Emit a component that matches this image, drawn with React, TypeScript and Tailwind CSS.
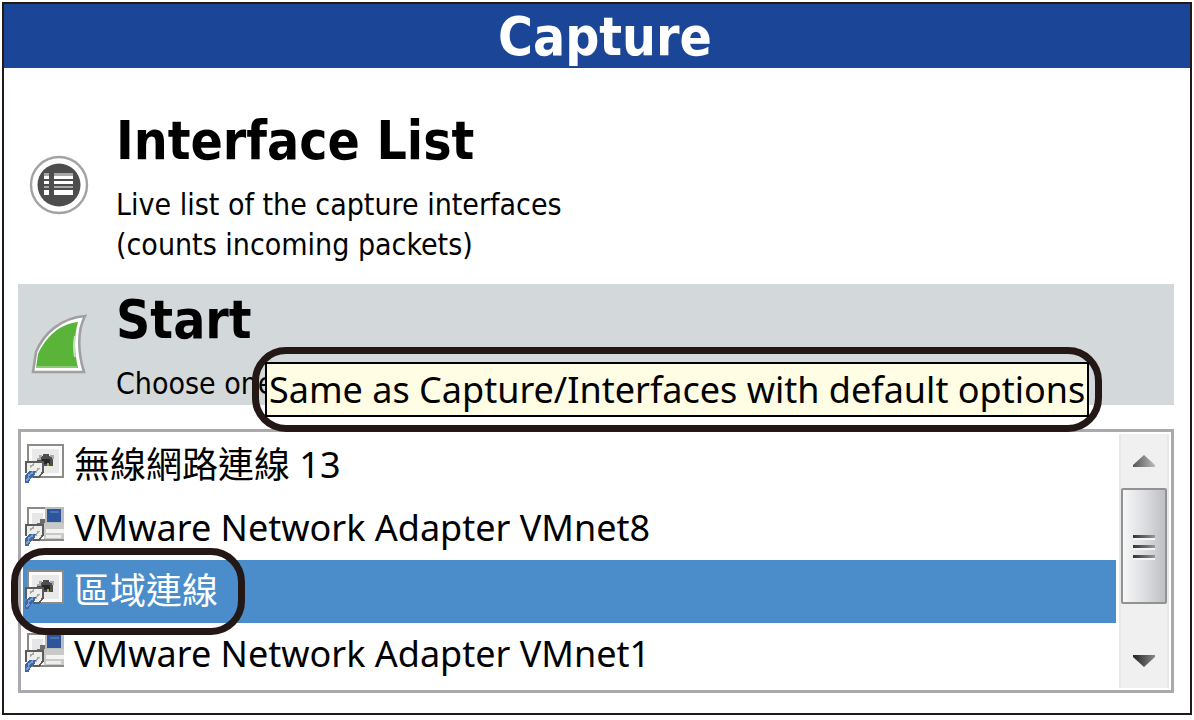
import type { ReactNode } from "react";

function ListIcon() {
  return (
    <svg width="60" height="60" viewBox="0 0 60 60" aria-hidden="true">
      <circle cx="30" cy="30" r="28" fill="#fff" stroke="#a3a3a3" strokeWidth="2.4" />
      <circle cx="30" cy="30" r="21.5" fill="#4d4d4d" />
      <g fill="#fff" shapeRendering="crispEdges">
        <rect x="15" y="18" width="5" height="3" fill="#a8a8a8" />
        <rect x="15" y="21" width="5" height="3" />
        <rect x="15" y="26" width="5" height="3" />
        <rect x="15" y="31" width="5" height="2" fill="#a8a8a8" />
        <rect x="15" y="35" width="5" height="5" />
        <rect x="25" y="18" width="19" height="3" fill="#a8a8a8" />
        <rect x="25" y="21" width="19" height="3" />
        <rect x="25" y="26" width="19" height="3" />
        <rect x="25" y="31" width="19" height="2" fill="#a8a8a8" />
        <rect x="25" y="35" width="19" height="5" />
      </g>
    </svg>
  );
}

function FinIcon() {
  return (
    <svg width="56" height="60" viewBox="0 0 56 60" aria-hidden="true">
      <path
        d="M2 58 L5 38 C13 19 30 4 54 2 C46 17 47 39 53 58 Z"
        fill="#fff"
        stroke="#a0a0a0"
        strokeWidth="2.6"
      />
      <path d="M5 54 L7 40 C15 23 28 10 47 8 C43 22 43 37 47 54 Z" fill="#5bb43a" />
      <path d="M5 53 H46" stroke="#8dca75" strokeWidth="2" />
      <path d="M44 22 Q42 32 44 43" fill="none" stroke="#c5e3ba" strokeWidth="2" />
    </svg>
  );
}

function Plug() {
  return (
    <g>
      <path d="M1 18 H18 V29 L14 33 H6 L1 29 Z" fill="#eeeeec" />
      <path d="M1 29 V18 H18 V28 L14 33 H8" fill="none" stroke="#5c5c5a" strokeWidth="2" />
      <path d="M5 23 L9 20 M10 29 L14 24" stroke="#a8a8a6" strokeWidth="2" />
      <path d="M0 31 L4 27 L11 27 L9 32 L5 35 L4 39 H0 Z" fill="#3c67a8" />
      <path d="M3 32 L8 28 M1 37 L4 34" stroke="#7da0d0" strokeWidth="2" />
    </g>
  );
}

function SocketIcon() {
  return (
    <svg width="39" height="39" viewBox="0 0 39 39" shapeRendering="crispEdges" aria-hidden="true">
      <rect x="3" y="1" width="35" height="32" fill="#fbfbfb" stroke="#8b8c87" strokeWidth="2" />
      <rect x="7" y="5" width="27" height="24" fill="#e9e9e9" />
      <path d="M12 16 H16 V12 H18 V10 H24 V12 H28 V22 H12 Z" fill="#4c4d4c" />
      <path d="M12 15 H15 V12 H17 M25 12 H28 V15" fill="none" stroke="#aaa" strokeWidth="2" />
      <rect x="17" y="15" width="8" height="5" fill="#262826" />
      <rect x="22" y="19" width="2" height="3" fill="#b8a634" />
      <Plug />
    </svg>
  );
}

function VirtualIcon() {
  return (
    <svg width="39" height="39" viewBox="0 0 39 39" shapeRendering="crispEdges" aria-hidden="true">
      <rect x="3" y="1" width="35" height="32" fill="#fbfbfb" stroke="#8b8c87" strokeWidth="2" />
      <rect x="7" y="6" width="11" height="22" fill="#e6e6e6" />
      <path d="M12 16 H15 V12 H20 V19 H12 Z" fill="#6b6b6b" />
      <rect x="20" y="0" width="19" height="18" fill="#b9bcc1" />
      <rect x="22" y="2" width="14" height="13" fill="#2c559b" />
      <path d="M25 4 H34 V6 H25 Z" fill="#4a73b4" />
      <rect x="19" y="16" width="20" height="16" fill="#c9c9c7" />
      <rect x="21" y="22" width="18" height="4" fill="#f4f4f4" />
      <rect x="21" y="28" width="15" height="3" fill="#eeeeec" />
      <path d="M19 33 H39" stroke="#8b8c87" strokeWidth="2" />
      <Plug />
    </svg>
  );
}

function Action({ icon, title, children }: { icon: ReactNode; title: string; children: ReactNode }) {
  return (
    <button type="button" className="flex w-full items-center text-left">
      <span className="flex w-[82px] shrink-0 justify-center pb-2">{icon}</span>
      <span className="block pl-4">
        <span className="block text-[53px] leading-[56px] font-bold">{title}</span>
        <span className="mt-4 block text-[30px] leading-[40px]">{children}</span>
      </span>
    </button>
  );
}

const interfaces = [
  { name: "無線網路連線 13", virtual: false },
  { name: "VMware Network Adapter VMnet8", virtual: true },
  { name: "區域連線", virtual: false, selected: true },
  { name: "VMware Network Adapter VMnet1", virtual: true },
];

const ring = "pointer-events-none absolute border-[7px] border-[#231815]";

export default function App() {
  return (
    <div className="bg-white p-0.5 font-['DejaVu_Sans_Condensed','DejaVu_Sans',sans-serif] text-black">
      <main className="border-2 border-[#231815] pb-5">
        <h1 className="bg-[#1b4697] pt-0.5 pl-4 text-center text-[53px] leading-[62px] font-bold text-white">
          Capture
        </h1>

        <div className="pr-4 pl-3.5">
          <section className="pt-[45px] pb-[19px]">
            <Action icon={<ListIcon />} title="Interface List">
              Live list of the capture interfaces
              <br />
              (counts incoming packets)
            </Action>
          </section>

          <section className="relative bg-[#d3d8db] pt-2 pb-px">
            <Action icon={<FinIcon />} title="Start">
              Choose one
            </Action>
            <div className={`${ring} top-[63px] left-[234px] z-10 rounded-[34px] px-1.5 py-2`}>
              <div
                role="tooltip"
                className="border-2 border-black bg-[#fffde3] px-0.5 font-['Noto_Sans','Open_Sans',sans-serif] text-[36px] leading-[51px] whitespace-nowrap"
              >
                Same as Capture/Interfaces with default options
              </div>
            </div>
          </section>

          <div className="mt-6 flex border-3 border-[#a9a9ae] p-0.5">
            <ul
              aria-label="Capture interfaces"
              className="flex-1 font-['Noto_Sans','Open_Sans','Noto_Sans_CJK_TC',sans-serif] text-[36px]"
            >
              {interfaces.map((item) => (
                <li key={item.name} className="relative">
                  <button
                    type="button"
                    aria-pressed={!!item.selected}
                    className={
                      item.selected
                        ? "flex h-[63px] w-full items-center gap-2.5 bg-[#4a8dca] pb-1 pl-0.5 text-white"
                        : "flex h-[63px] w-full items-center gap-2.5 pb-1 pl-0.5"
                    }
                  >
                    {item.virtual ? <VirtualIcon /> : <SocketIcon />}
                    <span className="pt-0.5 leading-[57px]">{item.name}</span>
                  </button>
                  {item.selected && <div className={`${ring} -top-3 -left-3 z-10 h-[87px] w-[234px] rounded-[34px]`} />}
                </li>
              ))}
            </ul>

            <div className="ml-[3px] flex w-[50px] flex-col border-x-2 border-[#e8e8e8] bg-[#f0f0f0]">
              <button type="button" aria-label="Scroll up" className="flex h-[54px] items-center justify-center">
                <svg width="22" height="12" viewBox="0 0 22 12" aria-hidden="true">
                  <defs>
                    <linearGradient id="up" x1="0" x2="1">
                      <stop offset="0" stopColor="#555" />
                      <stop offset="1" stopColor="#bbb" />
                    </linearGradient>
                  </defs>
                  <path d="M0 12 V10 L11 0 L22 10 V12 Z" fill="url(#up)" />
                </svg>
              </button>
              <div className="flex h-[116px] flex-col items-center justify-center gap-[7px] rounded-xs border-2 border-[#929292] bg-linear-to-r from-[#f7f7f7] via-[#dcdee1] to-[#bfc0c5]">
                <span className="h-[3px] w-[22px] bg-linear-to-r from-[#333] to-[#999] shadow-[0_2px_0_#f5f5f5]" />
                <span className="h-[3px] w-[22px] bg-linear-to-r from-[#333] to-[#999] shadow-[0_2px_0_#f5f5f5]" />
                <span className="h-[3px] w-[22px] bg-linear-to-r from-[#333] to-[#999] shadow-[0_2px_0_#f5f5f5]" />
              </div>
              <button type="button" aria-label="Scroll down" className="mt-[30px] flex h-[54px] items-center justify-center">
                <svg width="22" height="12" viewBox="0 0 22 12" aria-hidden="true">
                  <defs>
                    <linearGradient id="down" x1="0" x2="1">
                      <stop offset="0" stopColor="#222" />
                      <stop offset="1" stopColor="#888" />
                    </linearGradient>
                  </defs>
                  <path d="M0 0 H22 V2 L11 12 L0 2 Z" fill="url(#down)" />
                </svg>
              </button>
            </div>
          </div>
        </div>
      </main>
    </div>
  );
}
